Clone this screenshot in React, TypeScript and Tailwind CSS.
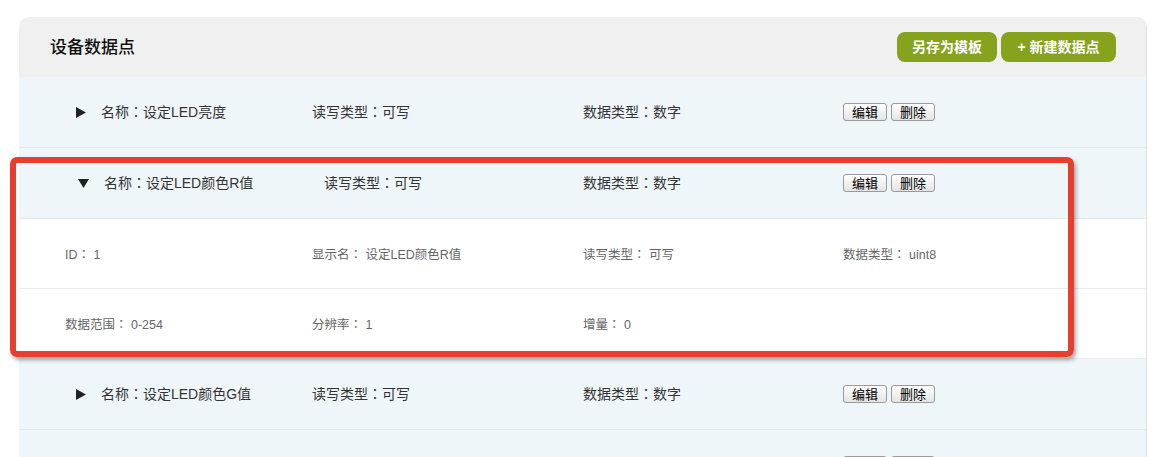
import React from 'react';

const font = { fontFamily: '"Liberation Sans", "Noto Sans CJK SC", sans-serif' };

type Point = {
  name: string;
  rw: string;
  type: string;
  open?: boolean;
};

const points: Point[] = [
  { name: '设定LED亮度', rw: '可写', type: '数字' },
  { name: '设定LED颜色R值', rw: '可写', type: '数字', open: true },
  { name: '设定LED颜色G值', rw: '可写', type: '数字' },
];

// centred full-width colon, like the YaHei one in the original
function C() {
  return <span className="font-['Noto_Sans_CJK_JP']">：</span>;
}

function Caret({ open }: { open?: boolean }) {
  return open ? (
    <svg width="11" height="10" viewBox="0 0 11 10" className="shrink-0">
      <polygon points="0,1 11,1 5.5,10" fill="#222" />
    </svg>
  ) : (
    <svg width="10" height="11" viewBox="0 0 10 11" className="shrink-0">
      <polygon points="0,0 10,5.5 0,11" fill="#222" />
    </svg>
  );
}

function SmallBtn({ label }: { label: string }) {
  return (
    <button className="h-[18px] w-[44px] rounded-[3px] border border-[#9a9a9a] bg-gradient-to-b from-white to-[#e4e4e4] text-[13px] leading-none text-black">
      {label}
    </button>
  );
}

function PointRow({ p }: { p: Point }) {
  return (
    <div
      className={
        'grid h-[71px] items-center border-b border-[#e4e9ec] bg-[#eff6fa] pl-[46px] text-[14px] text-[#333] ' +
        (p.open ? 'grid-cols-[259px_259px_260px_1fr]' : 'grid-cols-[247px_271px_260px_1fr]')
      }
    >
      <div className={'flex items-center gap-[15px] ' + (p.open ? 'pl-[13px]' : 'pl-[11px]')}>
        <Caret open={p.open} />
        <span>
          名称<C />
          {p.name}
        </span>
      </div>
      <div>
        读写类型<C />
        {p.rw}
      </div>
      <div>
        数据类型<C />
        {p.type}
      </div>
      <div className="flex gap-[4px]">
        <SmallBtn label="编辑" />
        <SmallBtn label="删除" />
      </div>
    </div>
  );
}

function DetailRow({ cells }: { cells: [string, string][] }) {
  return (
    <div className="grid h-[70px] grid-cols-[247px_271px_260px_1fr] items-center border-b border-[#ececec] bg-white pl-[46px] pt-[2px] text-[12.5px] text-[#666]">
      {cells.map(([k, v], i) => (
        <div key={i}>
          {k}
          {k && <C />}
          {v && ' ' + v}
        </div>
      ))}
    </div>
  );
}

export default function App() {
  return (
    <div className="relative h-[457px] w-[1158px] overflow-hidden bg-white" style={font}>
      <div className="pl-[19px] pt-[17px]">
        <div className="w-[1128px] overflow-hidden rounded-t-[10px] border-r border-[#e2e2e2]">
          {/* header */}
          <div className="flex h-[60px] items-center justify-between bg-[#f0f0f0] pl-[31px] pr-[30px]">
            <h2 className="pt-[2px] text-[17px] font-medium text-[#111]">设备数据点</h2>
            <div className="flex gap-[4px]">
              <button className="h-[30px] w-[100px] rounded-[8px] bg-[#87a21d] text-[14px] font-bold text-white">
                另存为模板
              </button>
              <button className="h-[30px] w-[115px] rounded-[8px] bg-[#87a21d] text-[14px] font-bold text-white">
                + 新建数据点
              </button>
            </div>
          </div>

          {points.map((p, i) => (
            <React.Fragment key={i}>
              <PointRow p={p} />
              {p.open && (
                <>
                  <DetailRow
                    cells={[
                      ['ID', '1'],
                      ['显示名', p.name],
                      ['读写类型', '可写'],
                      ['数据类型', 'uint8'],
                    ]}
                  />
                  <DetailRow
                    cells={[
                      ['数据范围', '0-254'],
                      ['分辨率', '1'],
                      ['增量', '0'],
                      ['', ''],
                    ]}
                  />
                </>
              )}
            </React.Fragment>
          ))}

          {/* next row, only its button tops reach the window */}
          <div className="grid h-[40px] grid-cols-[247px_271px_260px_1fr] bg-[#eff6fa] pl-[46px] pt-[26px]">
            <div />
            <div />
            <div />
            <div className="flex gap-[4px]">
              <div className="h-[18px] w-[44px] rounded-[3px] border border-[#9a9a9a] bg-white" />
              <div className="h-[18px] w-[44px] rounded-[3px] border border-[#9a9a9a] bg-white" />
            </div>
          </div>
        </div>
      </div>

      {/* annotation highlight */}
      <div className="pointer-events-none absolute left-[10px] top-[157px] h-[200px] w-[1064px] rounded-[7px] border-[6px] border-[#e63e30] shadow-[2px_3px_4px_rgba(0,0,0,0.35)]" />
    </div>
  );
}
